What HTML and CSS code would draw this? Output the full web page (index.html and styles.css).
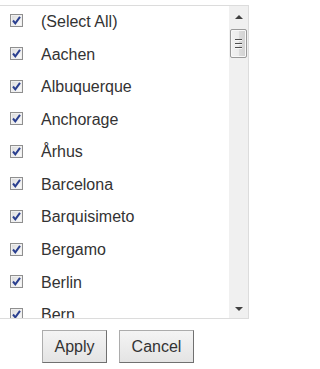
FILE: index.html
```html
<!DOCTYPE html>
<html>
<head>
<meta charset="utf-8">
<link rel="stylesheet" href="styles.css">
</head>
<body>
<div class="filter">
  <div class="listbox">
    <ul class="list">
      <li class="item"><span class="cb"><svg viewBox="0 0 11 11" width="11" height="11"><path d="M2 5.5 L4.3 8.3 L9 1.8" fill="none" stroke="#2a3f8f" stroke-width="2"/></svg></span><span class="label">(Select All)</span></li>
      <li class="item"><span class="cb"><svg viewBox="0 0 11 11" width="11" height="11"><path d="M2 5.5 L4.3 8.3 L9 1.8" fill="none" stroke="#2a3f8f" stroke-width="2"/></svg></span><span class="label">Aachen</span></li>
      <li class="item"><span class="cb"><svg viewBox="0 0 11 11" width="11" height="11"><path d="M2 5.5 L4.3 8.3 L9 1.8" fill="none" stroke="#2a3f8f" stroke-width="2"/></svg></span><span class="label">Albuquerque</span></li>
      <li class="item"><span class="cb"><svg viewBox="0 0 11 11" width="11" height="11"><path d="M2 5.5 L4.3 8.3 L9 1.8" fill="none" stroke="#2a3f8f" stroke-width="2"/></svg></span><span class="label">Anchorage</span></li>
      <li class="item"><span class="cb"><svg viewBox="0 0 11 11" width="11" height="11"><path d="M2 5.5 L4.3 8.3 L9 1.8" fill="none" stroke="#2a3f8f" stroke-width="2"/></svg></span><span class="label">Århus</span></li>
      <li class="item"><span class="cb"><svg viewBox="0 0 11 11" width="11" height="11"><path d="M2 5.5 L4.3 8.3 L9 1.8" fill="none" stroke="#2a3f8f" stroke-width="2"/></svg></span><span class="label">Barcelona</span></li>
      <li class="item"><span class="cb"><svg viewBox="0 0 11 11" width="11" height="11"><path d="M2 5.5 L4.3 8.3 L9 1.8" fill="none" stroke="#2a3f8f" stroke-width="2"/></svg></span><span class="label">Barquisimeto</span></li>
      <li class="item"><span class="cb"><svg viewBox="0 0 11 11" width="11" height="11"><path d="M2 5.5 L4.3 8.3 L9 1.8" fill="none" stroke="#2a3f8f" stroke-width="2"/></svg></span><span class="label">Bergamo</span></li>
      <li class="item"><span class="cb"><svg viewBox="0 0 11 11" width="11" height="11"><path d="M2 5.5 L4.3 8.3 L9 1.8" fill="none" stroke="#2a3f8f" stroke-width="2"/></svg></span><span class="label">Berlin</span></li>
      <li class="item"><span class="cb"><svg viewBox="0 0 11 11" width="11" height="11"><path d="M2 5.5 L4.3 8.3 L9 1.8" fill="none" stroke="#2a3f8f" stroke-width="2"/></svg></span><span class="label">Bern</span></li>
      <li class="item"><span class="cb"><svg viewBox="0 0 11 11" width="11" height="11"><path d="M2 5.5 L4.3 8.3 L9 1.8" fill="none" stroke="#2a3f8f" stroke-width="2"/></svg></span><span class="label">Bielefeld</span></li>
    </ul>
    <div class="scrollbar">
      <div class="arrow up"></div>
      <div class="thumb"><span></span><span></span><span></span></div>
      <div class="track"></div>
      <div class="arrow down"></div>
    </div>
  </div>
  <div class="buttons">
    <button class="btn apply">Apply</button>
    <button class="btn cancel">Cancel</button>
  </div>
</div>
</body>
</html>
```
FILE: styles.css
```css
html, body {
  margin: 0;
  padding: 0;
  background: #fff;
}
.filter {
  padding-top: 5px;
  font-family: "Liberation Sans", Arial, sans-serif;
}
.listbox {
  width: 248px;
  height: 312px;
  border-top: 1px solid #dcdcdc;
  border-bottom: 1px solid #dcdcdc;
  border-right: 1px solid #dcdcdc;
  display: flex;
  overflow: hidden;
}
.list {
  flex: 1;
  list-style: none;
  margin: 0;
  padding: 0 0 0 10px;
  overflow: hidden;
}
.item {
  height: 32.6px;
  display: flex;
  align-items: center;
  padding-top: 0;
  box-sizing: border-box;
}
.item:first-child {
  margin-top: -1.4px;
}
.cb {
  width: 11px;
  height: 11px;
  border: 1px solid #8f8f8f;
  background: linear-gradient(135deg, #d9d9d9 0%, #f4f4f4 70%, #fff 100%);
  display: flex;
  flex: none;
  box-shadow: inset 0 0 0 1px #f0f0f0;
}
.cb svg {
  display: block;
}
.label {
  margin-left: 18px;
  font-size: 16px;
  color: #333;
  position: relative;
  top: 1px;
  white-space: nowrap;
}
.scrollbar {
  width: 19px;
  flex: none;
  background: #f0f0f0;
  display: flex;
  flex-direction: column;
  align-items: center;
}
.arrow {
  width: 0;
  height: 0;
  border-left: 4px solid transparent;
  border-right: 4px solid transparent;
  flex: none;
}
.arrow.up {
  border-bottom: 4px solid #404040;
  margin-top: 9px;
  margin-bottom: 10px;
}
.arrow.down {
  border-top: 4px solid #404040;
  margin-bottom: 7px;
}
.thumb {
  width: 15px;
  height: 27px;
  border: 1px solid #9a9a9a;
  border-radius: 2px;
  background: linear-gradient(90deg, #f2f2f2 0%, #ececec 50%, #dcdcdc 51%, #d2d2d2 100%);
  display: flex;
  flex-direction: column;
  align-items: center;
  justify-content: center;
  gap: 2px;
  flex: none;
  box-shadow: inset 0 0 0 1px #f8f8f8;
}
.thumb span {
  width: 7px;
  height: 1px;
  background: #505050;
  border-bottom: 1px solid #f8f8f8;
}
.track {
  flex: 1;
}
.buttons {
  display: flex;
  gap: 12px;
  padding-left: 42px;
  margin-top: 11px;
}
.btn {
  height: 33px;
  border: 1px solid #acacac;
  border-right-color: #707070;
  border-bottom-color: #707070;
  background: linear-gradient(#f4f4f4, #e4e4e4);
  font-family: "Liberation Sans", Arial, sans-serif;
  font-size: 16px;
  color: #333;
  padding: 0;
  margin: 0;
  border-radius: 0;
}
.apply {
  width: 65px;
}
.cancel {
  width: 75px;
}
```
